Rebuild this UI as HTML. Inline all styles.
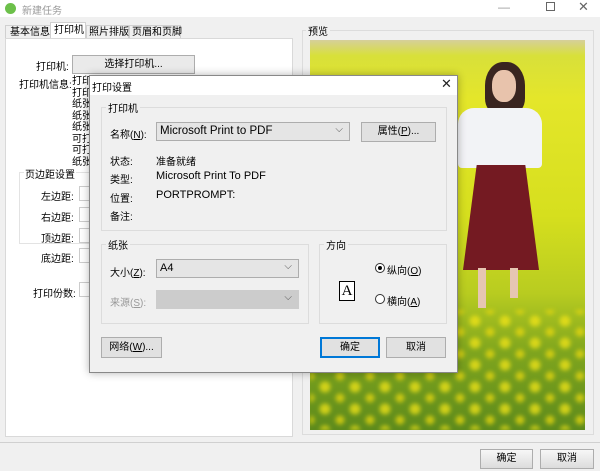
<!DOCTYPE html>
<html><head><meta charset="utf-8"><style>
*{box-sizing:border-box;margin:0;padding:0}
body{width:600px;height:471px;position:relative;overflow:hidden;background:#f0f0f0;font-family:"Liberation Sans","Noto Sans CJK SC",sans-serif;font-size:10px;color:#000}
.a{position:absolute;white-space:nowrap}
.btn{position:absolute;background:#e1e1e1;border:1px solid #adadad;text-align:center;line-height:17px;font-size:10px}
.grp{position:absolute;border:1px solid #dcdcdc}
.gl{position:absolute;top:-8px;left:4px;background:#f0f0f0;padding:0 2px;font-size:10px}
.cb{position:absolute;background:#e5e5e5;border:1px solid #adadad;padding-left:3px;line-height:17px;font-size:11px}
.cb:after{content:"⌵";position:absolute;right:6px;top:-2px;color:#555;font-size:10px}
.u{text-decoration:underline}
</style></head><body>
<div class="a" style="left:0;top:0;width:600px;height:17px;background:#fff"></div>
<div class="a" style="left:5px;top:3px;width:11px;height:11px;border-radius:50%;background:#6cc04a"></div>
<div class="a" style="left:22px;top:2px;color:#999">新建任务</div>
<div class="a" style="left:498px;top:0;color:#999;font-size:12px">—</div>
<div class="a" style="left:546px;top:2px;width:9px;height:9px;border:1px solid #666"></div>
<div class="a" style="left:578px;top:-1px;color:#666;font-size:13px">✕</div>
<!-- tabs -->
<div class="a" style="left:5px;top:25px;width:46px;height:14px;border:1px solid #d0d0d0;border-bottom:none;padding-left:4px;line-height:13px">基本信息</div>
<div class="a" style="left:50px;top:22px;width:36px;height:17px;border:1px solid #d0d0d0;border-bottom:none;background:#fff;padding-left:3px;line-height:16px">打印机</div>
<div class="a" style="left:86px;top:25px;width:43px;height:14px;border:1px solid #d0d0d0;border-bottom:none;padding-left:2px;line-height:13px">照片排版</div>
<div class="a" style="left:129px;top:25px;width:52px;height:14px;border:1px solid #d0d0d0;border-bottom:none;padding-left:2px;line-height:13px">页眉和页脚</div>
<div class="a" style="left:5px;top:38px;width:288px;height:399px;background:#fff;border:1px solid #d9d9d9"></div>
<div class="a" style="left:36px;top:58px">打印机:</div>
<div class="btn" style="left:72px;top:55px;width:123px;height:19px;background:#eaeaea">选择打印机...</div>
<div class="a" style="left:19px;top:76px">打印机信息:</div>
<div class="a" style="left:72px;top:76px;line-height:11.5px">打印<br>打印<br>纸张<br>纸张<br>纸张<br>可打<br>可打<br>纸张</div>
<div class="a" style="left:19px;top:172px;width:80px;height:72px;border:1px solid #e3e3e3"></div>
<div class="a" style="left:24px;top:166px;background:#fff;padding:0 1px">页边距设置</div>
<div class="a" style="left:41px;top:188px">左边距:</div>
<div class="a" style="left:41px;top:209px">右边距:</div>
<div class="a" style="left:41px;top:230px">顶边距:</div>
<div class="a" style="left:41px;top:250px">底边距:</div>
<div class="a" style="left:33px;top:285px">打印份数:</div>
<div class="a" style="left:79px;top:186px;width:12px;height:15px;border:1px solid #ccc"></div>
<div class="a" style="left:79px;top:207px;width:12px;height:15px;border:1px solid #ccc"></div>
<div class="a" style="left:79px;top:228px;width:12px;height:15px;border:1px solid #ccc"></div>
<div class="a" style="left:79px;top:248px;width:12px;height:15px;border:1px solid #ccc"></div>
<div class="a" style="left:79px;top:282px;width:12px;height:15px;border:1px solid #ccc"></div>
<!-- preview -->
<div class="a" style="left:302px;top:30px;width:292px;height:405px;border:1px solid #dcdcdc"></div>
<div class="a" style="left:306px;top:23px;background:#f0f0f0;padding:0 2px">预览</div>
<div class="a" style="left:310px;top:40px;width:275px;height:390px;overflow:hidden;background:linear-gradient(180deg,#d6cf9a 0%,#d8e03a 4%,#e4e62a 15%,#d6df1e 45%,#b8cc20 65%,#7fa51e 80%,#5d8a1c 100%)">
<div class="a" style="left:0;top:270px;width:275px;height:120px;filter:blur(2px);opacity:.75;background:radial-gradient(circle,#f2e418 5px,transparent 6px) 0 0/30px 22px,radial-gradient(circle,#e8d810 4px,transparent 5px) 15px 11px/30px 22px"></div>
</div>
<div class="a" style="left:485px;top:62px;width:40px;height:52px;border-radius:45% 45% 30% 30%;background:#3a2520"></div>
<div class="a" style="left:492px;top:70px;width:24px;height:32px;border-radius:45%;background:#e8c3ac"></div>
<div class="a" style="left:458px;top:108px;width:84px;height:60px;border-radius:16px 16px 4px 4px;background:#f2f3f6"></div>
<div class="a" style="left:463px;top:165px;width:76px;height:105px;background:#741a22;clip-path:polygon(18% 0,82% 0,100% 100%,0 100%)"></div>
<div class="a" style="left:478px;top:268px;width:8px;height:40px;background:#e6c6b2"></div>
<div class="a" style="left:510px;top:268px;width:8px;height:30px;background:#e6c6b2"></div>
<!-- bottom -->
<div class="a" style="left:0;top:442px;width:600px;height:1px;background:#d0d0d0"></div>
<div class="btn" style="left:480px;top:449px;width:53px;height:20px;background:linear-gradient(#f7f7f7,#dcdcdc);line-height:18px">确定</div>
<div class="btn" style="left:540px;top:449px;width:54px;height:20px;background:linear-gradient(#f7f7f7,#dcdcdc);line-height:18px">取消</div>
<!-- dialog -->
<div class="a" style="left:89px;top:75px;width:369px;height:298px;background:#f0f0f0;border:1px solid #888;box-shadow:0 0 8px rgba(0,0,0,.3)"></div>
<div class="a" style="left:90px;top:76px;width:367px;height:19px;background:#fff"></div>
<div class="a" style="left:92px;top:79px">打印设置</div>
<div class="a" style="left:441px;top:76px;font-size:13px;color:#222">✕</div>
<div class="grp" style="left:101px;top:107px;width:346px;height:124px"><div class="gl">打印机</div></div>
<div class="a" style="left:110px;top:126px">名称(<span class="u">N</span>):</div>
<div class="cb" style="left:156px;top:122px;width:194px;height:19px;font-size:11.5px">Microsoft Print to PDF</div>
<div class="btn" style="left:361px;top:122px;width:75px;height:20px">属性(<span class="u">P</span>)...</div>
<div class="a" style="left:110px;top:153px">状态:</div><div class="a" style="left:156px;top:153px">准备就绪</div>
<div class="a" style="left:110px;top:171px">类型:</div><div class="a" style="left:156px;top:170px;font-size:11px">Microsoft Print To PDF</div>
<div class="a" style="left:110px;top:190px">位置:</div><div class="a" style="left:156px;top:189px;font-size:11px">PORTPROMPT:</div>
<div class="a" style="left:110px;top:208px">备注:</div>
<div class="grp" style="left:101px;top:244px;width:208px;height:80px"><div class="gl">纸张</div></div>
<div class="a" style="left:110px;top:264px">大小(<span class="u">Z</span>):</div>
<div class="cb" style="left:156px;top:259px;width:143px;height:19px">A4</div>
<div class="a" style="left:110px;top:294px;color:#999">来源(<span class="u">S</span>):</div>
<div class="cb" style="left:156px;top:290px;width:143px;height:19px;background:#ccc;border-color:#ccc"></div>
<div class="grp" style="left:319px;top:244px;width:128px;height:80px"><div class="gl">方向</div></div>
<div class="a" style="left:339px;top:281px;width:16px;height:20px;border:1px solid #000;background:#fff;font-family:'Liberation Serif',serif;font-size:15px;text-align:center;line-height:18px">A</div>
<div class="a" style="left:375px;top:263px;width:10px;height:10px;border:1px solid #333;border-radius:50%;background:#fff"><div class="a" style="left:2px;top:2px;width:4px;height:4px;border-radius:50%;background:#000"></div></div>
<div class="a" style="left:387px;top:262px">纵向(<span class="u">O</span>)</div>
<div class="a" style="left:375px;top:294px;width:10px;height:10px;border:1px solid #333;border-radius:50%;background:#fff"></div>
<div class="a" style="left:387px;top:293px">横向(<span class="u">A</span>)</div>
<div class="btn" style="left:101px;top:337px;width:61px;height:21px;line-height:19px">网络(<span class="u">W</span>)...</div>
<div class="btn" style="left:320px;top:337px;width:60px;height:21px;line-height:18px;border:2px solid #0078d7">确定</div>
<div class="btn" style="left:386px;top:337px;width:60px;height:21px;line-height:19px">取消</div>
</body></html>
